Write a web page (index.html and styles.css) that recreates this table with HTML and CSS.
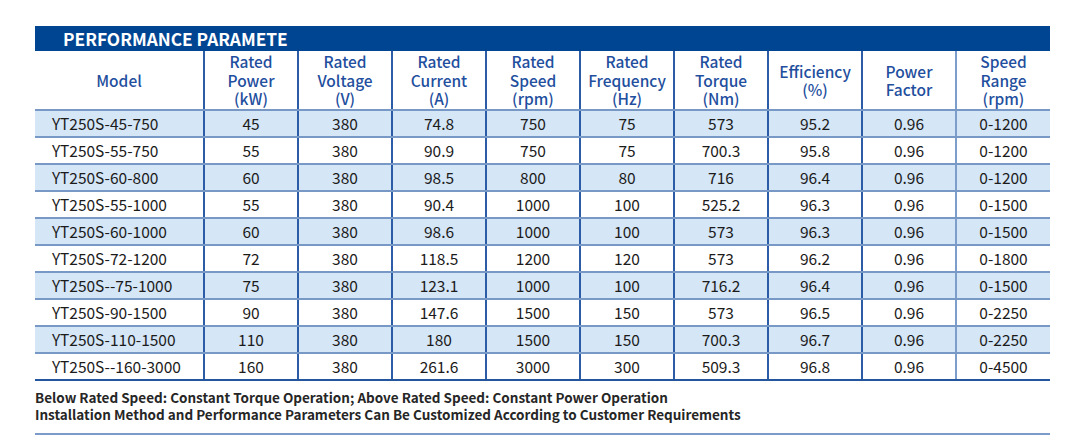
FILE: index.html
```html
<!DOCTYPE html>
<html lang="en">
<head>
<meta charset="utf-8">
<title>Performance Parameters</title>
<link rel="stylesheet" href="styles.css">
</head>
<body>
<div class="sheet">
  <div class="title-bar"><span class="title">PERFORMANCE PARAMETE</span></div>
  <table class="perf">
    <colgroup>
      <col class="c-model">
      <col class="c-num"><col class="c-num"><col class="c-num"><col class="c-num"><col class="c-num">
      <col class="c-num"><col class="c-num"><col class="c-num"><col class="c-num">
    </colgroup>
    <thead>
      <tr>
        <th>Model</th>
        <th>Rated<br>Power<br>(kW)</th>
        <th>Rated<br>Voltage<br>(V)</th>
        <th>Rated<br>Current<br>(A)</th>
        <th>Rated<br>Speed<br>(rpm)</th>
        <th>Rated<br>Frequency<br>(Hz)</th>
        <th>Rated<br>Torque<br>(Nm)</th>
        <th>Efficiency<br>(%)</th>
        <th>Power<br>Factor</th>
        <th class="last">Speed<br>Range<br>(rpm)</th>
      </tr>
    </thead>
    <tbody>
      <tr class="alt"><td class="model">YT250S-45-750</td><td>45</td><td>380</td><td>74.8</td><td>750</td><td>75</td><td>573</td><td>95.2</td><td>0.96</td><td class="last">0-1200</td></tr>
      <tr><td class="model">YT250S-55-750</td><td>55</td><td>380</td><td>90.9</td><td>750</td><td>75</td><td>700.3</td><td>95.8</td><td>0.96</td><td class="last">0-1200</td></tr>
      <tr class="alt"><td class="model">YT250S-60-800</td><td>60</td><td>380</td><td>98.5</td><td>800</td><td>80</td><td>716</td><td>96.4</td><td>0.96</td><td class="last">0-1200</td></tr>
      <tr><td class="model">YT250S-55-1000</td><td>55</td><td>380</td><td>90.4</td><td>1000</td><td>100</td><td>525.2</td><td>96.3</td><td>0.96</td><td class="last">0-1500</td></tr>
      <tr class="alt"><td class="model">YT250S-60-1000</td><td>60</td><td>380</td><td>98.6</td><td>1000</td><td>100</td><td>573</td><td>96.3</td><td>0.96</td><td class="last">0-1500</td></tr>
      <tr><td class="model">YT250S-72-1200</td><td>72</td><td>380</td><td>118.5</td><td>1200</td><td>120</td><td>573</td><td>96.2</td><td>0.96</td><td class="last">0-1800</td></tr>
      <tr class="alt"><td class="model">YT250S--75-1000</td><td>75</td><td>380</td><td>123.1</td><td>1000</td><td>100</td><td>716.2</td><td>96.4</td><td>0.96</td><td class="last">0-1500</td></tr>
      <tr><td class="model">YT250S-90-1500</td><td>90</td><td>380</td><td>147.6</td><td>1500</td><td>150</td><td>573</td><td>96.5</td><td>0.96</td><td class="last">0-2250</td></tr>
      <tr class="alt"><td class="model">YT250S-110-1500</td><td>110</td><td>380</td><td>180</td><td>1500</td><td>150</td><td>700.3</td><td>96.7</td><td>0.96</td><td class="last">0-2250</td></tr>
      <tr class="end"><td class="model">YT250S--160-3000</td><td>160</td><td>380</td><td>261.6</td><td>3000</td><td>300</td><td>509.3</td><td>96.8</td><td>0.96</td><td class="last">0-4500</td></tr>
    </tbody>
  </table>
  <div class="notes">
    <p>Below Rated Speed: Constant Torque Operation; Above Rated Speed: Constant Power Operation</p>
    <p>Installation Method and Performance Parameters Can Be Customized According to Customer Requirements</p>
  </div>
</div>
</body>
</html>
```

FILE: styles.css
```css
html, body {
  margin: 0;
  padding: 0;
  background: #ffffff;
}

body {
  font-family: "Noto Sans CJK SC", "Noto Sans", sans-serif;
}

.sheet {
  width: 1015px;
  margin-left: 35px;
  padding-top: 26px;
}

.title-bar {
  height: 25px;
  background: #004592;
  display: flex;
  align-items: center;
  padding-left: 28px;
}

.title {
  color: #ffffff;
  font-size: 17.3px;
  font-weight: 700;
  line-height: 25px;
}

.perf {
  width: 1015px;
  border-collapse: collapse;
  table-layout: fixed;
}

.c-model { width: 169px; }
.c-num { width: 94px; }

.perf th {
  height: 58px;
  padding: 0;
  font-size: 15.5px;
  font-weight: 500;
  line-height: 18.5px;
  color: #1f4f9e;
  text-align: center;
  vertical-align: middle;
  border-left: 2px solid #2d5ca6;
  border-bottom: 2px solid #7898c6;
}

.perf th:first-child,
.perf td:first-child {
  border-left: none;
}

.perf td {
  height: 25px;
  padding: 0;
  font-size: 15.5px;
  line-height: 25px;
  color: #1b1b1b;
  text-align: center;
  border-left: 2px solid #2d5ca6;
  border-bottom: 2px solid #7898c6;
}

.perf th.last,
.perf td.last {
  border-left-color: #7d9dca;
}

.perf td.model {
  text-align: left;
  padding-left: 17px;
}

.perf tr.alt td {
  background: #d5e6f6;
}

.perf tr.end td {
  border-bottom: 2px solid #24559f;
}

.notes {
  padding-top: 8px;
  padding-bottom: 10px;
  border-bottom: 2px solid #7c9bcb;
}

.notes p {
  margin: 0;
  font-size: 13.5px;
  font-weight: 700;
  line-height: 17px;
  color: #262626;
}
```
